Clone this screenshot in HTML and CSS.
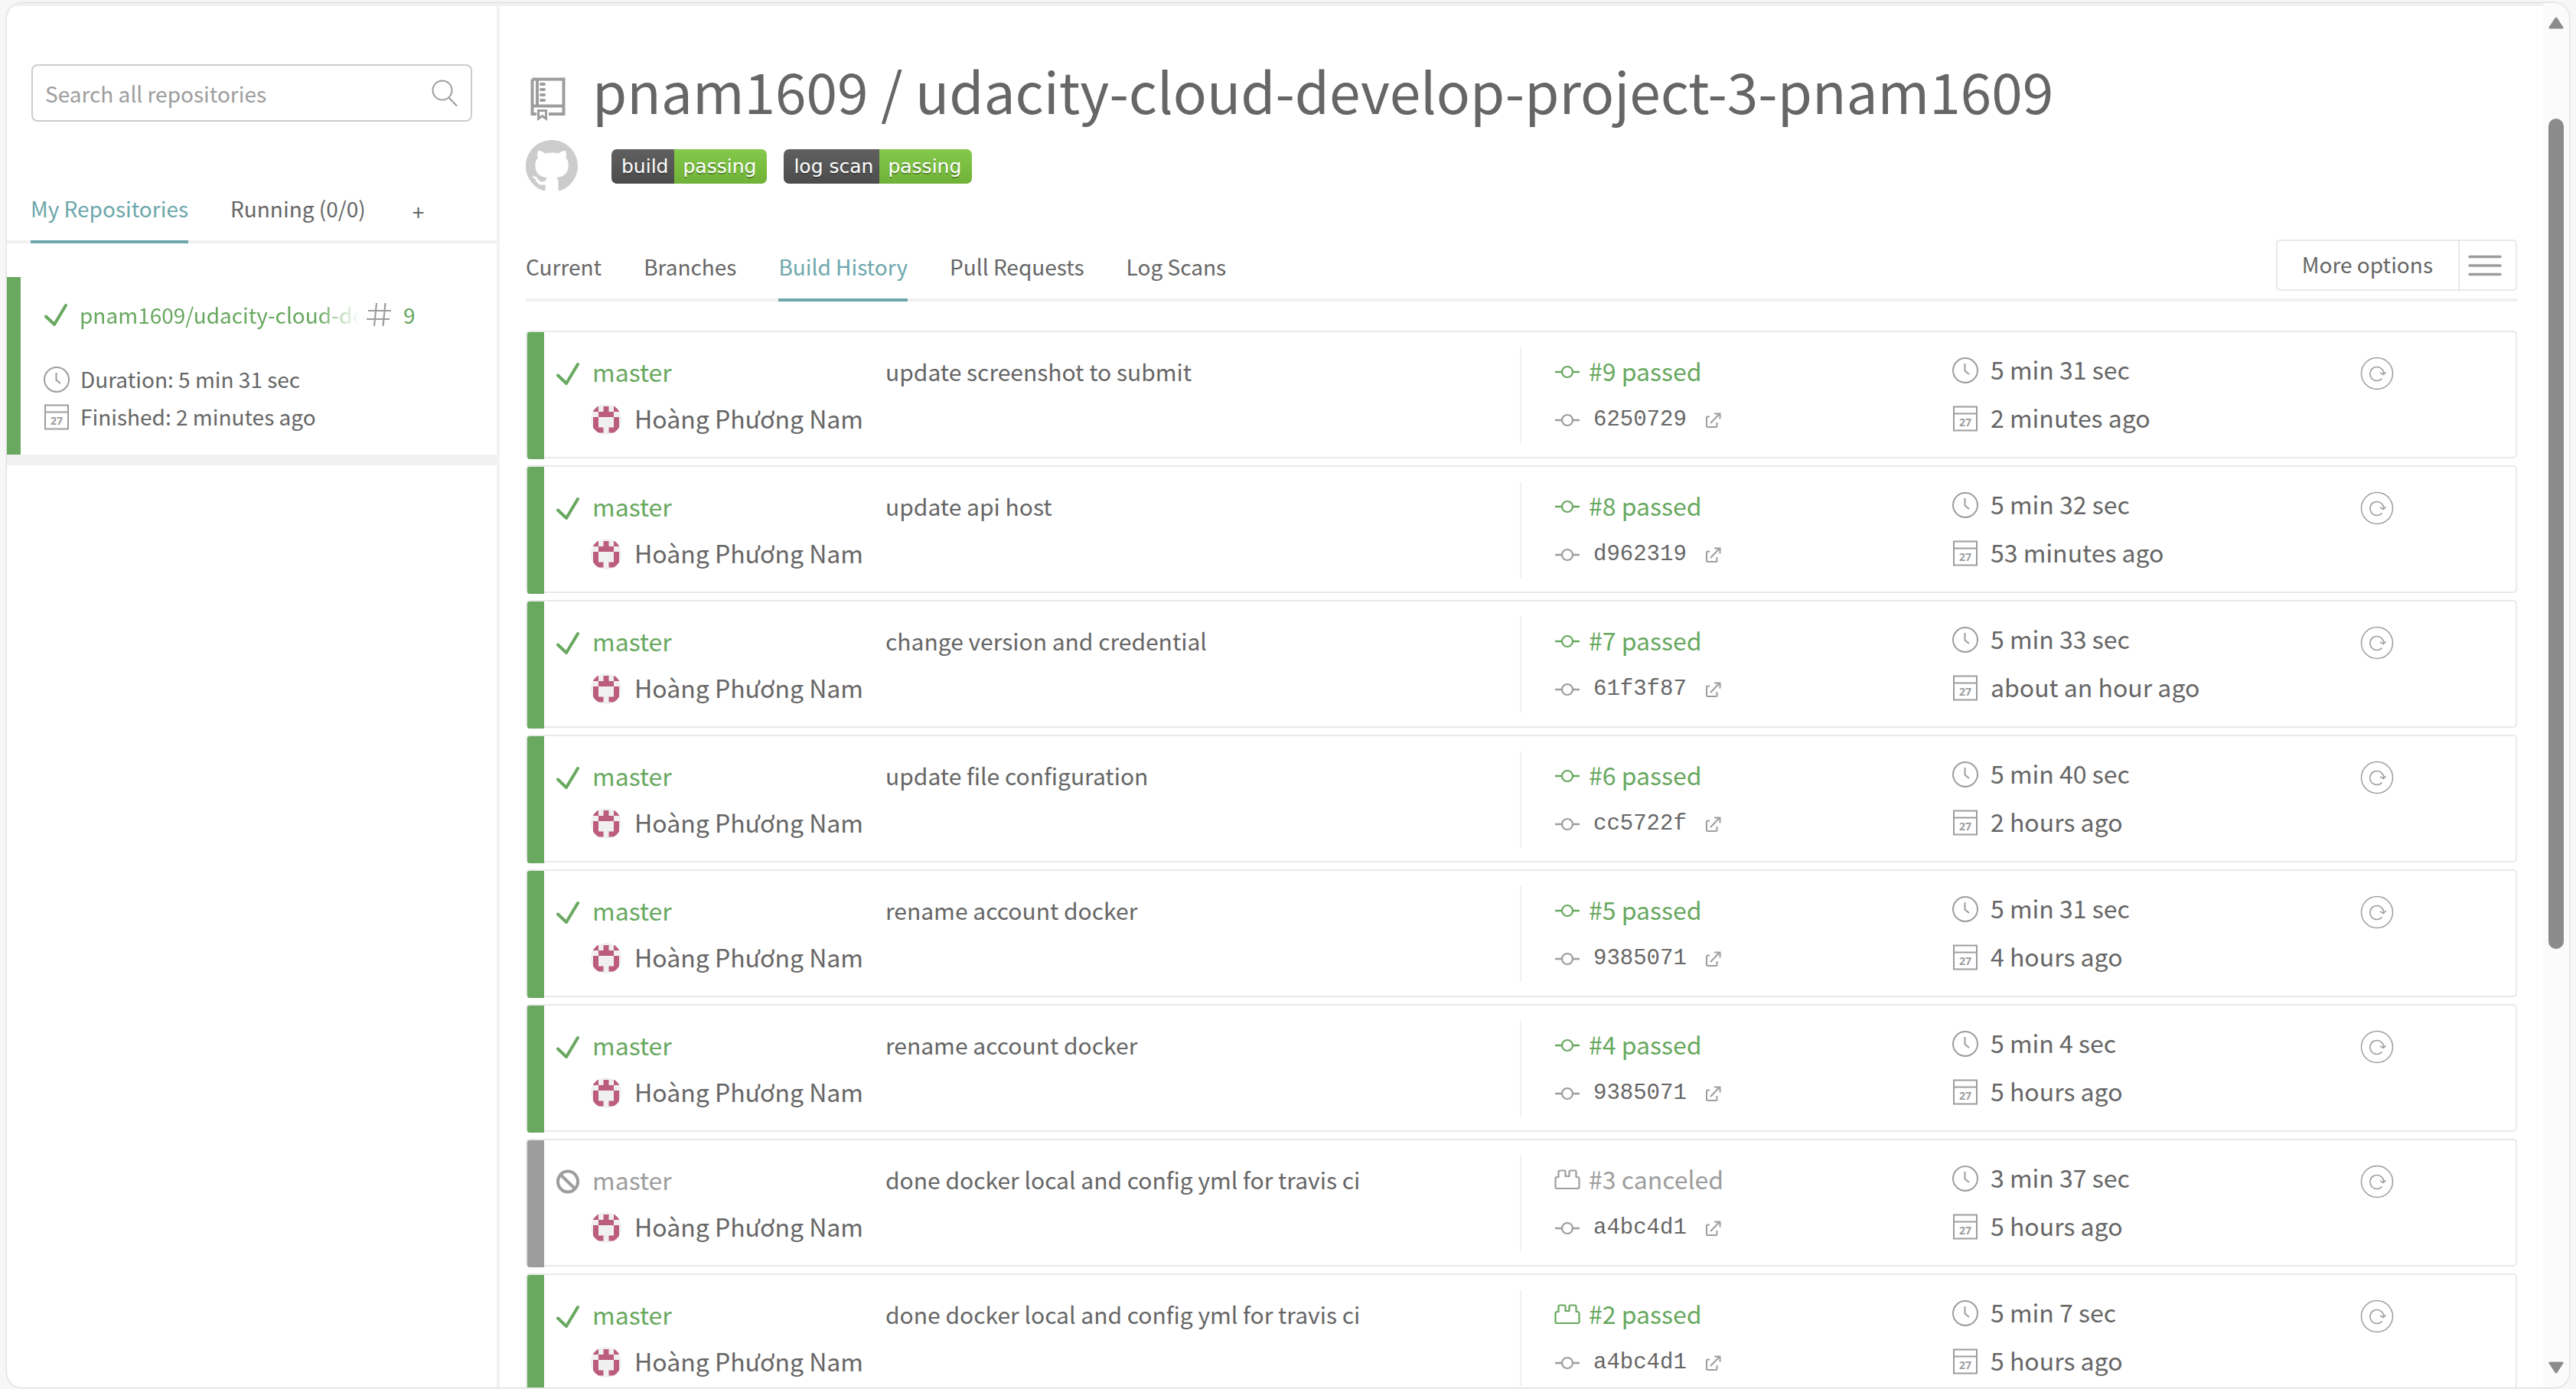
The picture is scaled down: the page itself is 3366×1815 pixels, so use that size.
FILE: index.html
```html
<!DOCTYPE html>
<html lang="en">
<head>
<meta charset="utf-8">
<meta name="viewport" content="width=device-width, initial-scale=1">
<title>pnam1609/udacity-cloud-develop-project-3-pnam1609 - Build History</title>
<link rel="stylesheet" href="styles.css">
</head>
<body>
<svg class="sprite" aria-hidden="true">
  <symbol id="i-check" viewBox="0 0 30 36"><path d="M2 20.500L13 31L28 6" fill="none" stroke="currentColor" stroke-width="4" stroke-linecap="round" stroke-linejoin="round"/></symbol>
  <symbol id="i-cancel" viewBox="0 0 30 36"><path d="M15 4.500a13 13.500 0 1 0 .01 0zM5.500 9l19 18.500" fill="none" stroke="currentColor" stroke-width="4"/></symbol>
  <symbol id="i-clock" viewBox="0 0 34 34"><circle cx="17" cy="17" r="16" fill="none" stroke="currentColor" stroke-width="2"/><path d="M16.500 8V17.500L22 22" fill="none" stroke="currentColor" stroke-width="2"/></symbol>
  <symbol id="i-calendar" viewBox="0 0 34 34"><path d="M2 1.500H32V32.500H2zM2 10.500H32" fill="none" stroke="currentColor" stroke-width="2"/><text x="17" y="27" text-anchor="middle" class="cal-day">27</text></symbol>
  <symbol id="i-commit" viewBox="0 0 34 34"><path d="M1 17H10M24 17H33" stroke="currentColor" stroke-width="2.400"/><circle cx="17" cy="17" r="7" fill="none" stroke="currentColor" stroke-width="2.200"/></symbol>
  <symbol id="i-brick" viewBox="0 0 34 34"><path d="M4 13H5.500V6.500Q5.500 4.500 7.500 4.500H12.500Q14.500 4.500 14.500 6.500V12H19.500V6.500Q19.500 4.500 21.500 4.500H26.500Q28.500 4.500 28.500 6.500V13H30Q32.500 13 32.500 15.500V26Q32.500 28 30.500 28H3.500Q1.500 28 1.500 26V15.500Q1.500 13 4 13z" fill="none" stroke="currentColor" stroke-width="2.200" stroke-linejoin="round"/></symbol>
  <symbol id="i-external" viewBox="0 0 22 22"><path d="M6 6.500H3.500Q2 6.500 2 8V18.500Q2 20 3.500 20H14Q15.500 20 15.500 18.500V14M7 15L19 2.500M12 2.500H19.500V9.500" fill="none" stroke="currentColor" stroke-width="2"/></symbol>
  <symbol id="i-restart" viewBox="0 0 44 44"><circle cx="22" cy="22" r="20.500" fill="none" stroke="currentColor" stroke-width="1.500"/><path d="M28.500 28.500A9 9 0 1 1 30.600 20.500L30.500 23M26 21L30.500 23.500L33.500 20" fill="none" stroke="currentColor" stroke-width="1.500"/></symbol>
  <symbol id="i-hash" viewBox="0 0 34 34"><path d="M14 2L11 32M25.500 2L22.500 32M3 12H33M1 23H31" fill="none" stroke="currentColor" stroke-width="2.200"/></symbol>
  <symbol id="i-avatar" viewBox="0 0 40 46">
    <clipPath id="avatar-clip"><circle cx="20" cy="25" r="20"/></clipPath>
    <g clip-path="url(#avatar-clip)"><path d="M0 5H40V45H0z" fill="#f0f0f0"/><path d="M3 8h7v7h-7zM16.500 8h7v7h-7zM30 8h7v7h-7zM10 15h20v7h-20zM3 22h7v13.500h-7zM30 22h7v13.500h-7zM3 35.500h13.500v7h-13.500zM23.500 35.500h13.500v7h-13.500z" fill="#bc5d7e"/></g>
  </symbol>
</svg>

<div class="window">
  <aside class="sidebar">
    <form class="search" role="search">
      <label class="visually-hidden" for="repo-search">Repository name</label>
      <input id="repo-search" type="search" placeholder="Search all repositories">
      <button class="search-button" type="button" aria-label="Search"><svg class="search-icon" viewBox="0 0 34 36" aria-hidden="true"><circle cx="14" cy="14" r="12.500" fill="none" stroke="currentColor" stroke-width="2"/><path d="M22.500 23.500L33 34.500" stroke="currentColor" stroke-width="2"/></svg></button>
    </form>
    <nav class="side-tabs" aria-label="Repositories">
      <a class="tab is-active" href="#mine">My Repositories</a>
      <a class="tab" href="#running">Running (0/0)</a>
      <a class="tab tab-add" href="#add">+</a>
    </nav>
    <article class="repo-card">
      <h2 class="repo-heading">
        <svg class="repo-check" aria-hidden="true"><use href="#i-check"/></svg>
        <a class="repo-name" href="#repo">pnam1609/udacity-cloud-develop-project-3-pnam1609</a>
        <svg class="repo-hash" aria-hidden="true"><use href="#i-hash"/></svg>
        <a class="repo-number" href="#build-9">9</a>
      </h2>
      <p class="repo-line"><svg class="icon" aria-hidden="true"><use href="#i-clock"/></svg>Duration: 5 min 31 sec</p>
      <p class="repo-line"><svg class="icon" aria-hidden="true"><use href="#i-calendar"/></svg>Finished: 2 minutes ago</p>
    </article>
  </aside>

  <main class="main">
    <header class="repo-title">
      <svg class="book-icon" viewBox="0 0 56 86" aria-hidden="true"><path d="M8.500 29.500H49.500V75H30M14 75H8.500V29.500M15 30V64M8 64.500H50" fill="none" stroke="currentColor" stroke-width="4"/><path d="M20 37h4M20 44h4M20 51h4M20 58h4" stroke="currentColor" stroke-width="4" stroke-linecap="round" transform="translate(0 -1)"/><path d="M16.500 70.500H26.500V81L21.500 77.500L16.500 81z" fill="none" stroke="currentColor" stroke-width="3"/></svg>
      <h1><a href="#owner">pnam1609</a> / <a href="#repo">udacity-cloud-develop-project-3-pnam1609</a></h1>
    </header>
    <div class="badges">
      <a class="github" href="#github" aria-label="GitHub"><svg class="github-icon" viewBox="0 0 16 16" aria-hidden="true"><path fill="currentColor" d="M8 0C3.580 0 0 3.580 0 8c0 3.540 2.290 6.530 5.470 7.590.4.070.55-.17.55-.38 0-.19-.01-.82-.01-1.490-2.010.37-2.530-.49-2.690-.94-.09-.23-.48-.94-.82-1.130-.28-.15-.68-.52-.01-.53.63-.01 1.080.58 1.230.82.72 1.210 1.870.87 2.330.66.07-.52.28-.87.51-1.070-1.780-.2-3.640-.89-3.640-3.950 0-.87.31-1.590.82-2.150-.08-.2-.36-1.020.08-2.120 0 0 .67-.21 2.200.82.64-.18 1.320-.27 2-.27.68 0 1.360.09 2 .27 1.530-1.040 2.200-.82 2.200-.82.44 1.100.16 1.920.08 2.120.51.56.82 1.270.82 2.150 0 3.070-1.870 3.750-3.650 3.950.29.25.54.73.54 1.480 0 1.070-.01 1.930-.01 2.200 0 .21.15.46.55.38A8.013 8.013 0 0016 8c0-4.420-3.580-8-8-8z"/></svg></a>
      <button class="badge" type="button"><span class="badge-key">build</span><span class="badge-value">passing</span></button>
      <button class="badge" type="button"><span class="badge-key">log scan</span><span class="badge-value">passing</span></button>
    </div>
    <div class="toolbar">
      <nav class="tabs" aria-label="Repository">
        <a class="tab" href="#current">Current</a>
        <a class="tab" href="#branches">Branches</a>
        <a class="tab is-active" href="#builds">Build History</a>
        <a class="tab" href="#pulls">Pull Requests</a>
        <a class="tab" href="#scans">Log Scans</a>
      </nav>
      <button class="more" type="button"><span class="more-label">More options</span><span class="more-menu"><svg class="menu-icon" viewBox="0 0 44 28" aria-hidden="true"><path d="M2 2.500H42M2 14H42M2 25.500H42" stroke="currentColor" stroke-width="3.600" stroke-linecap="round"/></svg></span></button>
    </div>

    <ul class="builds">
      <li class="build passed">
        <div class="branch"><svg class="status" aria-hidden="true"><use href="#i-check"/></svg><a class="branch-name" href="#b9">master</a><svg class="avatar" aria-hidden="true"><use href="#i-avatar"/></svg><span class="author">Hoàng Phương Nam</span></div>
        <p class="message">update screenshot to submit</p>
        <div class="commit"><a class="line state" href="#b9"><svg class="icon" aria-hidden="true"><use href="#i-commit"/></svg><span>#9 passed</span></a><a class="line sha" href="#c9"><svg class="icon" aria-hidden="true"><use href="#i-commit"/></svg><code>6250729</code><svg class="external" aria-hidden="true"><use href="#i-external"/></svg></a></div>
        <div class="times"><p class="line"><svg class="icon" aria-hidden="true"><use href="#i-clock"/></svg><time>5 min 31 sec</time></p><p class="line"><svg class="icon" aria-hidden="true"><use href="#i-calendar"/></svg><time>2 minutes ago</time></p></div>
        <button class="restart" type="button" aria-label="Restart build 9"><svg class="restart-icon" aria-hidden="true"><use href="#i-restart"/></svg></button>
      </li>
      <li class="build passed">
        <div class="branch"><svg class="status" aria-hidden="true"><use href="#i-check"/></svg><a class="branch-name" href="#b8">master</a><svg class="avatar" aria-hidden="true"><use href="#i-avatar"/></svg><span class="author">Hoàng Phương Nam</span></div>
        <p class="message">update api host</p>
        <div class="commit"><a class="line state" href="#b8"><svg class="icon" aria-hidden="true"><use href="#i-commit"/></svg><span>#8 passed</span></a><a class="line sha" href="#c8"><svg class="icon" aria-hidden="true"><use href="#i-commit"/></svg><code>d962319</code><svg class="external" aria-hidden="true"><use href="#i-external"/></svg></a></div>
        <div class="times"><p class="line"><svg class="icon" aria-hidden="true"><use href="#i-clock"/></svg><time>5 min 32 sec</time></p><p class="line"><svg class="icon" aria-hidden="true"><use href="#i-calendar"/></svg><time>53 minutes ago</time></p></div>
        <button class="restart" type="button" aria-label="Restart build 8"><svg class="restart-icon" aria-hidden="true"><use href="#i-restart"/></svg></button>
      </li>
      <li class="build passed">
        <div class="branch"><svg class="status" aria-hidden="true"><use href="#i-check"/></svg><a class="branch-name" href="#b7">master</a><svg class="avatar" aria-hidden="true"><use href="#i-avatar"/></svg><span class="author">Hoàng Phương Nam</span></div>
        <p class="message">change version and credential</p>
        <div class="commit"><a class="line state" href="#b7"><svg class="icon" aria-hidden="true"><use href="#i-commit"/></svg><span>#7 passed</span></a><a class="line sha" href="#c7"><svg class="icon" aria-hidden="true"><use href="#i-commit"/></svg><code>61f3f87</code><svg class="external" aria-hidden="true"><use href="#i-external"/></svg></a></div>
        <div class="times"><p class="line"><svg class="icon" aria-hidden="true"><use href="#i-clock"/></svg><time>5 min 33 sec</time></p><p class="line"><svg class="icon" aria-hidden="true"><use href="#i-calendar"/></svg><time>about an hour ago</time></p></div>
        <button class="restart" type="button" aria-label="Restart build 7"><svg class="restart-icon" aria-hidden="true"><use href="#i-restart"/></svg></button>
      </li>
      <li class="build passed">
        <div class="branch"><svg class="status" aria-hidden="true"><use href="#i-check"/></svg><a class="branch-name" href="#b6">master</a><svg class="avatar" aria-hidden="true"><use href="#i-avatar"/></svg><span class="author">Hoàng Phương Nam</span></div>
        <p class="message">update file configuration</p>
        <div class="commit"><a class="line state" href="#b6"><svg class="icon" aria-hidden="true"><use href="#i-commit"/></svg><span>#6 passed</span></a><a class="line sha" href="#c6"><svg class="icon" aria-hidden="true"><use href="#i-commit"/></svg><code>cc5722f</code><svg class="external" aria-hidden="true"><use href="#i-external"/></svg></a></div>
        <div class="times"><p class="line"><svg class="icon" aria-hidden="true"><use href="#i-clock"/></svg><time>5 min 40 sec</time></p><p class="line"><svg class="icon" aria-hidden="true"><use href="#i-calendar"/></svg><time>2 hours ago</time></p></div>
        <button class="restart" type="button" aria-label="Restart build 6"><svg class="restart-icon" aria-hidden="true"><use href="#i-restart"/></svg></button>
      </li>
      <li class="build passed">
        <div class="branch"><svg class="status" aria-hidden="true"><use href="#i-check"/></svg><a class="branch-name" href="#b5">master</a><svg class="avatar" aria-hidden="true"><use href="#i-avatar"/></svg><span class="author">Hoàng Phương Nam</span></div>
        <p class="message">rename account docker</p>
        <div class="commit"><a class="line state" href="#b5"><svg class="icon" aria-hidden="true"><use href="#i-commit"/></svg><span>#5 passed</span></a><a class="line sha" href="#c5"><svg class="icon" aria-hidden="true"><use href="#i-commit"/></svg><code>9385071</code><svg class="external" aria-hidden="true"><use href="#i-external"/></svg></a></div>
        <div class="times"><p class="line"><svg class="icon" aria-hidden="true"><use href="#i-clock"/></svg><time>5 min 31 sec</time></p><p class="line"><svg class="icon" aria-hidden="true"><use href="#i-calendar"/></svg><time>4 hours ago</time></p></div>
        <button class="restart" type="button" aria-label="Restart build 5"><svg class="restart-icon" aria-hidden="true"><use href="#i-restart"/></svg></button>
      </li>
      <li class="build passed">
        <div class="branch"><svg class="status" aria-hidden="true"><use href="#i-check"/></svg><a class="branch-name" href="#b4">master</a><svg class="avatar" aria-hidden="true"><use href="#i-avatar"/></svg><span class="author">Hoàng Phương Nam</span></div>
        <p class="message">rename account docker</p>
        <div class="commit"><a class="line state" href="#b4"><svg class="icon" aria-hidden="true"><use href="#i-commit"/></svg><span>#4 passed</span></a><a class="line sha" href="#c4"><svg class="icon" aria-hidden="true"><use href="#i-commit"/></svg><code>9385071</code><svg class="external" aria-hidden="true"><use href="#i-external"/></svg></a></div>
        <div class="times"><p class="line"><svg class="icon" aria-hidden="true"><use href="#i-clock"/></svg><time>5 min 4 sec</time></p><p class="line"><svg class="icon" aria-hidden="true"><use href="#i-calendar"/></svg><time>5 hours ago</time></p></div>
        <button class="restart" type="button" aria-label="Restart build 4"><svg class="restart-icon" aria-hidden="true"><use href="#i-restart"/></svg></button>
      </li>
      <li class="build canceled">
        <div class="branch"><svg class="status" aria-hidden="true"><use href="#i-cancel"/></svg><a class="branch-name" href="#b3">master</a><svg class="avatar" aria-hidden="true"><use href="#i-avatar"/></svg><span class="author">Hoàng Phương Nam</span></div>
        <p class="message">done docker local and config yml for travis ci</p>
        <div class="commit"><a class="line state" href="#b3"><svg class="icon" aria-hidden="true"><use href="#i-brick"/></svg><span>#3 canceled</span></a><a class="line sha" href="#c3"><svg class="icon" aria-hidden="true"><use href="#i-commit"/></svg><code>a4bc4d1</code><svg class="external" aria-hidden="true"><use href="#i-external"/></svg></a></div>
        <div class="times"><p class="line"><svg class="icon" aria-hidden="true"><use href="#i-clock"/></svg><time>3 min 37 sec</time></p><p class="line"><svg class="icon" aria-hidden="true"><use href="#i-calendar"/></svg><time>5 hours ago</time></p></div>
        <button class="restart" type="button" aria-label="Restart build 3"><svg class="restart-icon" aria-hidden="true"><use href="#i-restart"/></svg></button>
      </li>
      <li class="build passed">
        <div class="branch"><svg class="status" aria-hidden="true"><use href="#i-check"/></svg><a class="branch-name" href="#b2">master</a><svg class="avatar" aria-hidden="true"><use href="#i-avatar"/></svg><span class="author">Hoàng Phương Nam</span></div>
        <p class="message">done docker local and config yml for travis ci</p>
        <div class="commit"><a class="line state" href="#b2"><svg class="icon" aria-hidden="true"><use href="#i-brick"/></svg><span>#2 passed</span></a><a class="line sha" href="#c2"><svg class="icon" aria-hidden="true"><use href="#i-commit"/></svg><code>a4bc4d1</code><svg class="external" aria-hidden="true"><use href="#i-external"/></svg></a></div>
        <div class="times"><p class="line"><svg class="icon" aria-hidden="true"><use href="#i-clock"/></svg><time>5 min 7 sec</time></p><p class="line"><svg class="icon" aria-hidden="true"><use href="#i-calendar"/></svg><time>5 hours ago</time></p></div>
        <button class="restart" type="button" aria-label="Restart build 2"><svg class="restart-icon" aria-hidden="true"><use href="#i-restart"/></svg></button>
      </li>
    </ul>
  </main>

  <div class="scrollbar" aria-hidden="true">
    <svg class="arrow" viewBox="0 0 20 16"><path d="M10 2L18 14H2z" fill="currentColor" stroke="currentColor" stroke-width="3" stroke-linejoin="round"/></svg>
    <div class="track"><div class="thumb"></div></div>
    <svg class="arrow" viewBox="0 0 20 16"><path d="M10 14L18 2H2z" fill="currentColor" stroke="currentColor" stroke-width="3" stroke-linejoin="round"/></svg>
  </div>
</div>
</body>
</html>
```
FILE: styles.css
```css
:root {
  --text: #666;
  --muted: #9d9d9d;
  --green: #68a85f;
  --teal: #6da7ac;
  --rule: #f0f0f0;
  --border: #e9e9e9;
}

* { box-sizing: border-box; }

body {
  margin: 0;
  height: 100vh;
  padding: 4px 9px 2px;
  background: #f7f7f7;
  color: var(--text);
  font-family: "Noto Sans CJK SC", "Noto Sans", sans-serif;
  font-size: 28px;
}

h1, h2, p, ul { margin: 0; padding: 0; font-weight: 400; }
ul { list-style: none; }
a { color: inherit; text-decoration: none; }
svg { display: block; flex: none; }
button, input { font: inherit; color: inherit; margin: 0; padding: 0; border: 0; background: none; }

.sprite { position: absolute; width: 0; height: 0; }
.visually-hidden { position: absolute; width: 1px; height: 1px; overflow: hidden; clip-path: inset(50%); }
.cal-day { font: 700 14px "Noto Sans", sans-serif; fill: currentColor; }

.window {
  display: flex;
  height: 100%;
  overflow: hidden;
  border-radius: 20px;
  background: #fff;
  box-shadow: 0 0 3px rgba(0, 0, 0, .25);
}

/* Sidebar */
.sidebar {
  flex: 0 0 644px;
  border-top: 4px solid var(--rule);
  border-right: 4px solid #f2f2f2;
}
.search {
  display: flex;
  align-items: center;
  height: 75px;
  margin: 76px 32px 92px;
  padding: 0 17px 0 16px;
  border: 2px solid #ccc;
  border-radius: 8px;
}
.search input { flex: 1; min-width: 0; height: 100%; outline: 0; appearance: none; }
.search input::placeholder { color: var(--muted); opacity: 1; }
.search-button { color: var(--muted); }
.search-icon { width: 34px; height: 36px; }

.tab {
  margin-bottom: -4px;
  padding-bottom: 21px;
  border-bottom: 4px solid transparent;
  line-height: 42px;
  white-space: nowrap;
}
.tab.is-active { color: var(--teal); border-color: var(--teal); }

.side-tabs {
  display: flex;
  gap: 55px;
  height: 67px;
  padding: 0 31px;
  border-bottom: 4px solid var(--rule);
}
.tab-add { padding: 0 6px; line-height: 50px; }

.repo-card {
  margin-top: 44px;
  padding: 29px 30px 25px;
  border-left: 18px solid var(--green);
  box-shadow: 0 14px 0 var(--rule);
}
.repo-heading {
  display: flex;
  align-items: center;
  margin-bottom: 40px;
  font-size: 28px;
  line-height: 40px;
  color: var(--green);
}
.repo-check { width: 32px; height: 36px; margin-right: 15px; }
.repo-name {
  width: 366px;
  overflow: hidden;
  white-space: nowrap;
  mask-image: linear-gradient(to right, #000 85%, transparent);
}
.repo-hash { width: 34px; height: 34px; margin: 0 15px 0 8px; color: var(--muted); }
.repo-line { display: flex; align-items: center; gap: 14px; line-height: 49px; }

.icon { width: 34px; height: 34px; color: var(--muted); }

/* Main column */
.main {
  flex: 1;
  min-width: 0;
  padding: 56px 34px 0;
  border-top: 4px solid var(--rule);
}
.repo-title { display: flex; align-items: center; gap: 31px; }
.book-icon { width: 56px; height: 86px; color: var(--muted); }
.repo-title h1 { font-size: 73px; line-height: 106px; white-space: nowrap; }

.badges { display: flex; align-items: center; margin: 13px 0 62px; }
.github { margin-right: 44px; color: #ccc; }
.github-icon { width: 68px; height: 68px; }
.badge {
  display: flex;
  height: 45px;
  margin-right: 22px;
  overflow: hidden;
  border-radius: 7px;
  color: #fff;
  font-family: "DejaVu Sans", sans-serif;
  font-size: 25px;
  line-height: 46px;
  text-shadow: 0 2px 0 rgba(0, 0, 0, .3);
  cursor: pointer;
}
.badge-key { padding: 0 8px 0 13px; background: linear-gradient(#606060, #4c4c4c); }
.badge-value { padding: 0 14px 0 11px; background: linear-gradient(#84c94b, #70b237); }

.toolbar {
  display: flex;
  justify-content: space-between;
  align-items: flex-start;
  border-bottom: 4px solid var(--rule);
}
.tabs { display: flex; gap: 55px; padding-top: 14px; }
.more {
  display: flex;
  height: 67px;
  border: 2px solid var(--border);
  border-radius: 5px;
  line-height: 60px;
  cursor: pointer;
}
.more-label { padding: 0 33px 0 32px; }
.more-menu { display: flex; align-items: center; padding: 0 18px 0 11px; border-left: 2px solid var(--border); color: var(--muted); }
.menu-icon { width: 44px; height: 28px; }

/* Build list */
.builds { display: grid; gap: 9px; margin-top: 38px; }
.build {
  display: grid;
  grid-template-columns: 22px minmax(0, 446fr) minmax(0, 829fr) minmax(0, 565fr) minmax(0, 533fr) minmax(0, 203fr);
  height: 167px;
  border: 2px solid var(--border);
  border-radius: 5px;
}
.build::before { content: ""; background: var(--state); border-radius: 3px 0 0 3px; }
.passed { --state: var(--green); }
.canceled { --state: var(--muted); }
.branch, .message, .commit, .times { margin: 20px 0 21px; line-height: 60px; white-space: nowrap; }

.branch {
  display: grid;
  grid-template-columns: 30px 40px 1fr;
  grid-template-rows: 61px 61px;
  column-gap: 15px;
  align-items: center;
  padding-left: 16px;
  font-size: 32px;
}
.status { width: 30px; height: 36px; margin-top: 6px; color: var(--state); }
.branch-name { grid-column: 2 / -1; color: var(--state); }
.branch-name, .author { padding-left: 2px; }
.avatar { grid-column: 2; width: 40px; height: 46px; }
.message { padding-top: 1px; font-size: 30px; }

.line { display: flex; align-items: center; height: 60px; }
.line + .line { margin-top: 3px; }
.line span, .line time { padding-bottom: 4px; font-size: 32px; line-height: 50px; }
.commit { padding: 2px 0 0 43px; border-left: 2px solid var(--rule); }
.state, .state .icon { color: var(--state); }
.state { gap: 11px; }
.sha { gap: 17px; }
.sha code { font: 29px/50px "Liberation Mono", monospace; }
.external { width: 22px; height: 22px; margin-left: 7px; color: var(--muted); }
.times .line { gap: 16px; }

.restart { align-self: start; justify-self: start; margin-top: 32px; color: var(--muted); cursor: pointer; }
.restart-icon { width: 44px; height: 44px; }

/* Scrollbar */
.scrollbar {
  display: flex;
  flex: 0 0 34px;
  flex-direction: column;
  align-items: center;
  gap: 117px;
  padding: 18px 0;
  background: #fbfbfb;
  color: #8b8b8b;
}
.arrow { width: 20px; height: 16px; }
.track { flex: 1; width: 20px; }
.thumb { height: 72%; border-radius: 10px; background: currentColor; }
```
